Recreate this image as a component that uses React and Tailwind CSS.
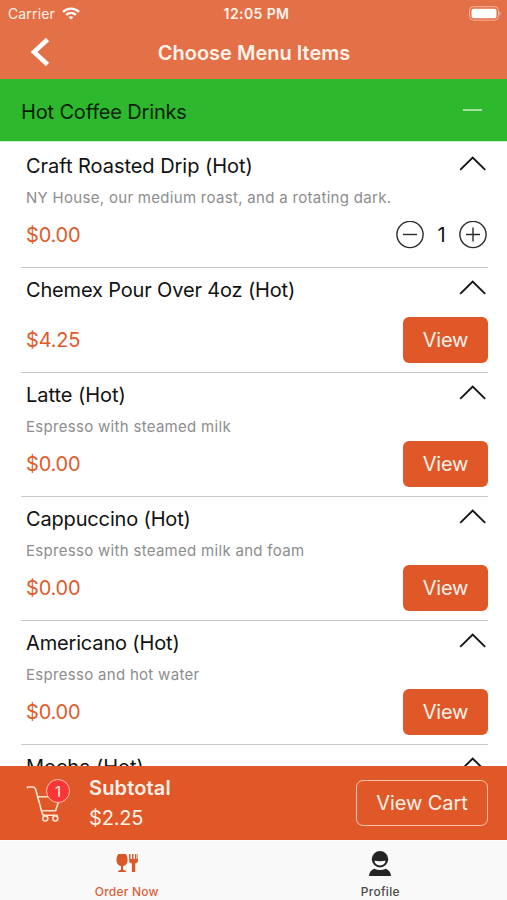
import React from "react";

const items = [
  { name: "Craft Roasted Drip (Hot)", desc: "NY House, our medium roast, and a rotating dark.", price: "$0.00", qty: 1 },
  { name: "Chemex Pour Over 4oz (Hot)", price: "$4.25", tight: true },
  { name: "Latte (Hot)", desc: "Espresso with steamed milk", price: "$0.00" },
  { name: "Cappuccino (Hot)", desc: "Espresso with steamed milk and foam", price: "$0.00", tight: true },
  { name: "Americano (Hot)", desc: "Espresso and hot water", price: "$0.00", tight: true },
  { name: "Mocha (Hot)", desc: "", price: "$0.00" },
];

function Chevron() {
  return (
    <svg className="block" width="28" height="16" viewBox="0 0 28 16" fill="none" stroke="#151515" strokeWidth="1.9">
      <path d="M1.200 13.900 13.700 1.500l12.500 12.400" />
    </svg>
  );
}

function RoundButton({ plus }) {
  return (
    <svg className="block" width="28" height="28" viewBox="0 0 28 28" fill="none" stroke="#2b2b2b" strokeWidth="1.4">
      <circle cx="14" cy="13.500" r="13.100" />
      <path d={plus ? "M7 13.500h14M14 6.500v14" : "M7 13.500h14"} />
    </svg>
  );
}

function Item({ item }) {
  return (
    <div className="shrink-0 border-b border-[#c9c9c9] pt-2 pb-[9px] pl-[5px]">
      <div className="flex h-7 items-center justify-between">
        <span className={`text-[20px] text-[#111] ${item.tight ? "tracking-[-0.16px]" : "tracking-[-0.04px]"}`}>{item.name}</span>
        <div className="mb-1 pr-px"><Chevron /></div>
      </div>
      {item.desc ? (
        <div className="h-8 pt-2 text-[15px] leading-5 tracking-[0.3px] text-[#8d8d8d]">{item.desc}</div>
      ) : (
        <div className="h-[13px]" />
      )}
      <div className="flex h-[46px] items-center justify-between">
        <span className="text-[20px] tracking-[-0.2px] text-[#e05a2b]">{item.price}</span>
        {item.qty ? (
          <div className="flex items-center pr-px">
            <RoundButton />
            <span className="w-[35px] text-center text-[20px] text-[#111]">{item.qty}</span>
            <RoundButton plus />
          </div>
        ) : (
          <button className="h-[46px] w-[85px] rounded-[6px] bg-[#e05828] text-[20px] tracking-[-0.2px] text-[#fff1e9]">View</button>
        )}
      </div>
    </div>
  );
}

function CartIcon() {
  return (
    <div className="relative h-[46px] w-[46px]">
      <svg className="block" width="46" height="46" viewBox="0 0 46 46" fill="none" stroke="#ffe3d3" strokeWidth="1.600" strokeLinecap="round" strokeLinejoin="round">
        <path d="M1.500 7.800v-.8h5.300c1.600 0 2.300.7 2.800 2.200l6.500 23.800c.4 1.600 1 2.300 2.600 2.300h12.500" />
        <path d="M12 16.800h22.200l-4.600 13.900H15.600" />
        <circle cx="19.300" cy="38.500" r="2.500" />
        <circle cx="29.300" cy="38.500" r="2.500" />
      </svg>
      <span className="absolute top-[-1px] left-[20px] flex h-6 w-6 items-center justify-center rounded-full border border-[#ffc6b5] bg-[#fb3535] text-[15px] leading-none text-[#ffe9e0]">1</span>
    </div>
  );
}

function OrderIcon() {
  return (
    <svg className="block" width="24" height="20" viewBox="0 0 24 20" fill="#dc5727">
      <path d="M3.300 1h7.600c1.300 2 1.900 4.400 1.700 6.800-.3 3-1.900 4.800-4.500 5.300v3.700l2.800.9V19H3.200v-1.300l2.800-.9v-3.700C3.400 12.600 1.800 10.800 1.500 7.800 1.300 5.400 2 3 3.300 1z" />
      <path d="M14.200 1h1.300v5h1.500V1h1.500v5h1.500V1h1.400v5h.9V1h.5l.2 6c0 2-1 3.200-2.800 3.500V19h-3.300v-8.500c-1.900-.3-2.900-1.500-2.900-3.500z" />
    </svg>
  );
}

function ProfileIcon() {
  return (
    <svg className="block" width="24" height="26" viewBox="0 0 24 26" fill="#242424">
      <circle cx="12" cy="9.300" r="8.200" />
      <path d="M6.400 10.800q5.600.9 11.200 0c-.4 2.900-2.700 4.600-5.600 4.600s-5.200-1.700-5.600-4.600z" fill="#f9f9f9" />
      <path d="M1 26c.3-3.600 1.900-6 5.200-7.200 3.500 1.600 8.100 1.600 11.600 0 3.300 1.200 4.900 3.600 5.200 7.200z" />
    </svg>
  );
}

export default function App() {
  return (
    <div className="flex h-[900px] w-[507px] flex-col overflow-hidden bg-white font-['Inter','Liberation_Sans',sans-serif]">
      <header className="h-[79px] shrink-0 bg-[#e37047] text-[#fff3eb]">
        <div className="grid h-[27px] grid-cols-3 items-center pr-[6px] pl-2">
          <div className="flex items-center gap-[7px]">
            <span className="text-[14px] tracking-[0.01em]">Carrier</span>
            <svg width="18" height="13" viewBox="0 0 18 13" fill="none" stroke="#fff" strokeWidth="2.300">
              <path d="M1 4.800c4.600-4.300 11.400-4.300 16 0" />
              <path d="M4.100 7.900c2.900-2.600 6.900-2.600 9.800 0" />
              <path d="M6.700 10.200 9 12.600l2.300-2.400c-1.300-1.200-3.300-1.200-4.600 0z" fill="#fff" stroke="none" />
            </svg>
          </div>
          <span className="pl-1 text-center text-[14px] font-semibold tracking-[0.400px]">12:05 PM</span>
          <svg className="justify-self-end" width="33" height="15" viewBox="0 0 33 15">
            <rect x="1.500" y=".7" width="29" height="13.500" rx="4" fill="none" stroke="#f6b59b" />
            <rect x="3.500" y="2.700" width="25" height="9.500" rx="2" fill="#fff" />
            <path d="M31.500 5.200v4.500c1.600-.9 1.600-3.600 0-4.500z" fill="#f6b59b" />
          </svg>
        </div>
        <div className="grid h-[50px] grid-cols-[60px_1fr_60px] items-center">
          <svg className="ml-[30px]" width="20" height="30" viewBox="0 0 20 30" fill="none" stroke="#fff" strokeWidth="4.600">
            <path d="M17.500 2.500 4 15l13.500 12.500" />
          </svg>
          <h1 className="pt-px pl-px text-center text-[20px] font-semibold">Choose Menu Items</h1>
        </div>
      </header>
      <div className="flex h-[63px] shrink-0 items-center justify-between border-b border-[#c5f5c8] bg-[#2eb82e] pr-[25px] pl-[21px]">
        <span className="pt-[3px] text-[20px] tracking-[-0.160px] text-[#082008]">Hot Coffee Drinks</span>
        <span className="h-[2px] w-[19px] bg-[#a3e3a0]" />
      </div>
      <main className="flex min-h-0 flex-1 flex-col overflow-hidden pt-[2px] pr-[19px] pl-[21px]">
        {items.map((item) => <Item key={item.name} item={item} />)}
      </main>
      <section className="flex h-[74px] shrink-0 items-center bg-[#e05828] pr-[19px] pl-[26px] text-[#fff1e9]">
        <CartIcon />
        <div className="ml-[17px] flex-1">
          <div className="text-[20px] leading-[30px] font-semibold tracking-[0.150px]">Subtotal</div>
          <div className="text-[20px] leading-[30px] tracking-[-0.200px]">$2.25</div>
        </div>
        <button className="h-[46px] w-[132px] rounded-[7px] border-[1.500px] border-[#ffc5aa] text-[20px] tracking-[-0.100px]">View Cart</button>
      </section>
      <nav className="grid h-[60px] shrink-0 grid-cols-2 border-t border-white bg-[#f9f9f9] text-[12px] font-medium">
        <div className="flex flex-col items-center pt-3 text-[#d8603a]">
          <OrderIcon />
          <span className="mt-[11px] leading-4 tracking-[0.200px]">Order Now</span>
        </div>
        <div className="flex flex-col items-center pt-[9px] text-[#4a4a4a]">
          <ProfileIcon />
          <span className="mt-2 leading-4 tracking-[0.300px]">Profile</span>
        </div>
      </nav>
    </div>
  );
}
